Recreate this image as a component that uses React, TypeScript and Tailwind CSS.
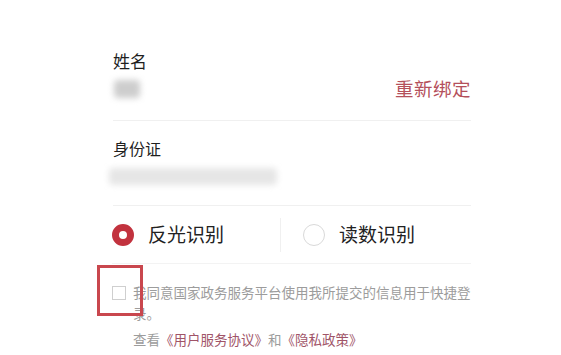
export default function App() {
  return (
    <div className="w-[561px] h-[355px] bg-white overflow-hidden font-['Noto_Sans_CJK_SC',sans-serif]">
      <div className="ml-[113px] w-[358px] pt-[49px]">
        {/* 姓名 */}
        <div className="h-[72px] border-b border-[#f0f0f0]">
          <div className="text-[17px] leading-[24px] text-[#1f1f1f]">姓名</div>
          <div className="h-[32px] flex items-center justify-between">
            <div className="w-[26px] h-[18px] ml-[1px] bg-[#cdcdcd] blur-[3px] rounded-sm" />
            <div className="text-[18.5px] text-[#b4505b] tracking-[0.5px]">重新绑定</div>
          </div>
        </div>

        {/* 身份证 */}
        <div className="h-[85px] pt-[16px] border-b border-[#f0f0f0]">
          <div className="text-[16px] leading-[22px] text-[#1f1f1f]">身份证</div>
          <div className="h-[32px] mt-[1px] flex items-center">
            <div className="w-[168px] h-[17px] -ml-[4px] bg-[#e6e6e6] blur-[3px] rounded" />
          </div>
        </div>

        {/* 识别方式 */}
        <div className="h-[58px] -ml-px flex items-center border-b border-[#f3f3f3]">
          <div className="w-[168px] flex items-center">
            <div className="w-[22px] h-[22px] rounded-full border-[7px] border-[#c2323e] bg-white" />
            <span className="ml-[14px] text-[19px] text-[#222]">反光识别</span>
          </div>
          <div className="w-px h-[34px] bg-[#f0f0f0]" />
          <div className="ml-[22px] flex items-center">
            <div className="w-[22px] h-[22px] rounded-full border border-[#d9d9d9] bg-white" />
            <span className="ml-[14px] text-[19px] text-[#222]">读数识别</span>
          </div>
        </div>

        {/* 协议 */}
        <div className="relative -ml-px pt-[18px]">
          <div className="flex">
            <div className="w-[14px] h-[14px] mt-[4px] border border-[#cfcfcf] bg-white shrink-0" />
            <p className="ml-[7px] w-[340px] text-[13.5px] leading-[21px] text-[#9c9c9c]">
              我同意国家政务服务平台使用我所提交的信息用于快捷登录。
            </p>
          </div>
          <p className="ml-[21px] mt-[5px] text-[13.5px] leading-[21px] text-[#9c9c9c]">
            查看<span className="text-[#a05468]">《用户服务协议》</span>和<span className="text-[#a05468]">《隐私政策》</span>
          </p>
          <div className="absolute left-[-15px] top-[1px] w-[46px] h-[51px] border-[3px] border-[#c9474e]" />
        </div>
      </div>
    </div>
  );
}
